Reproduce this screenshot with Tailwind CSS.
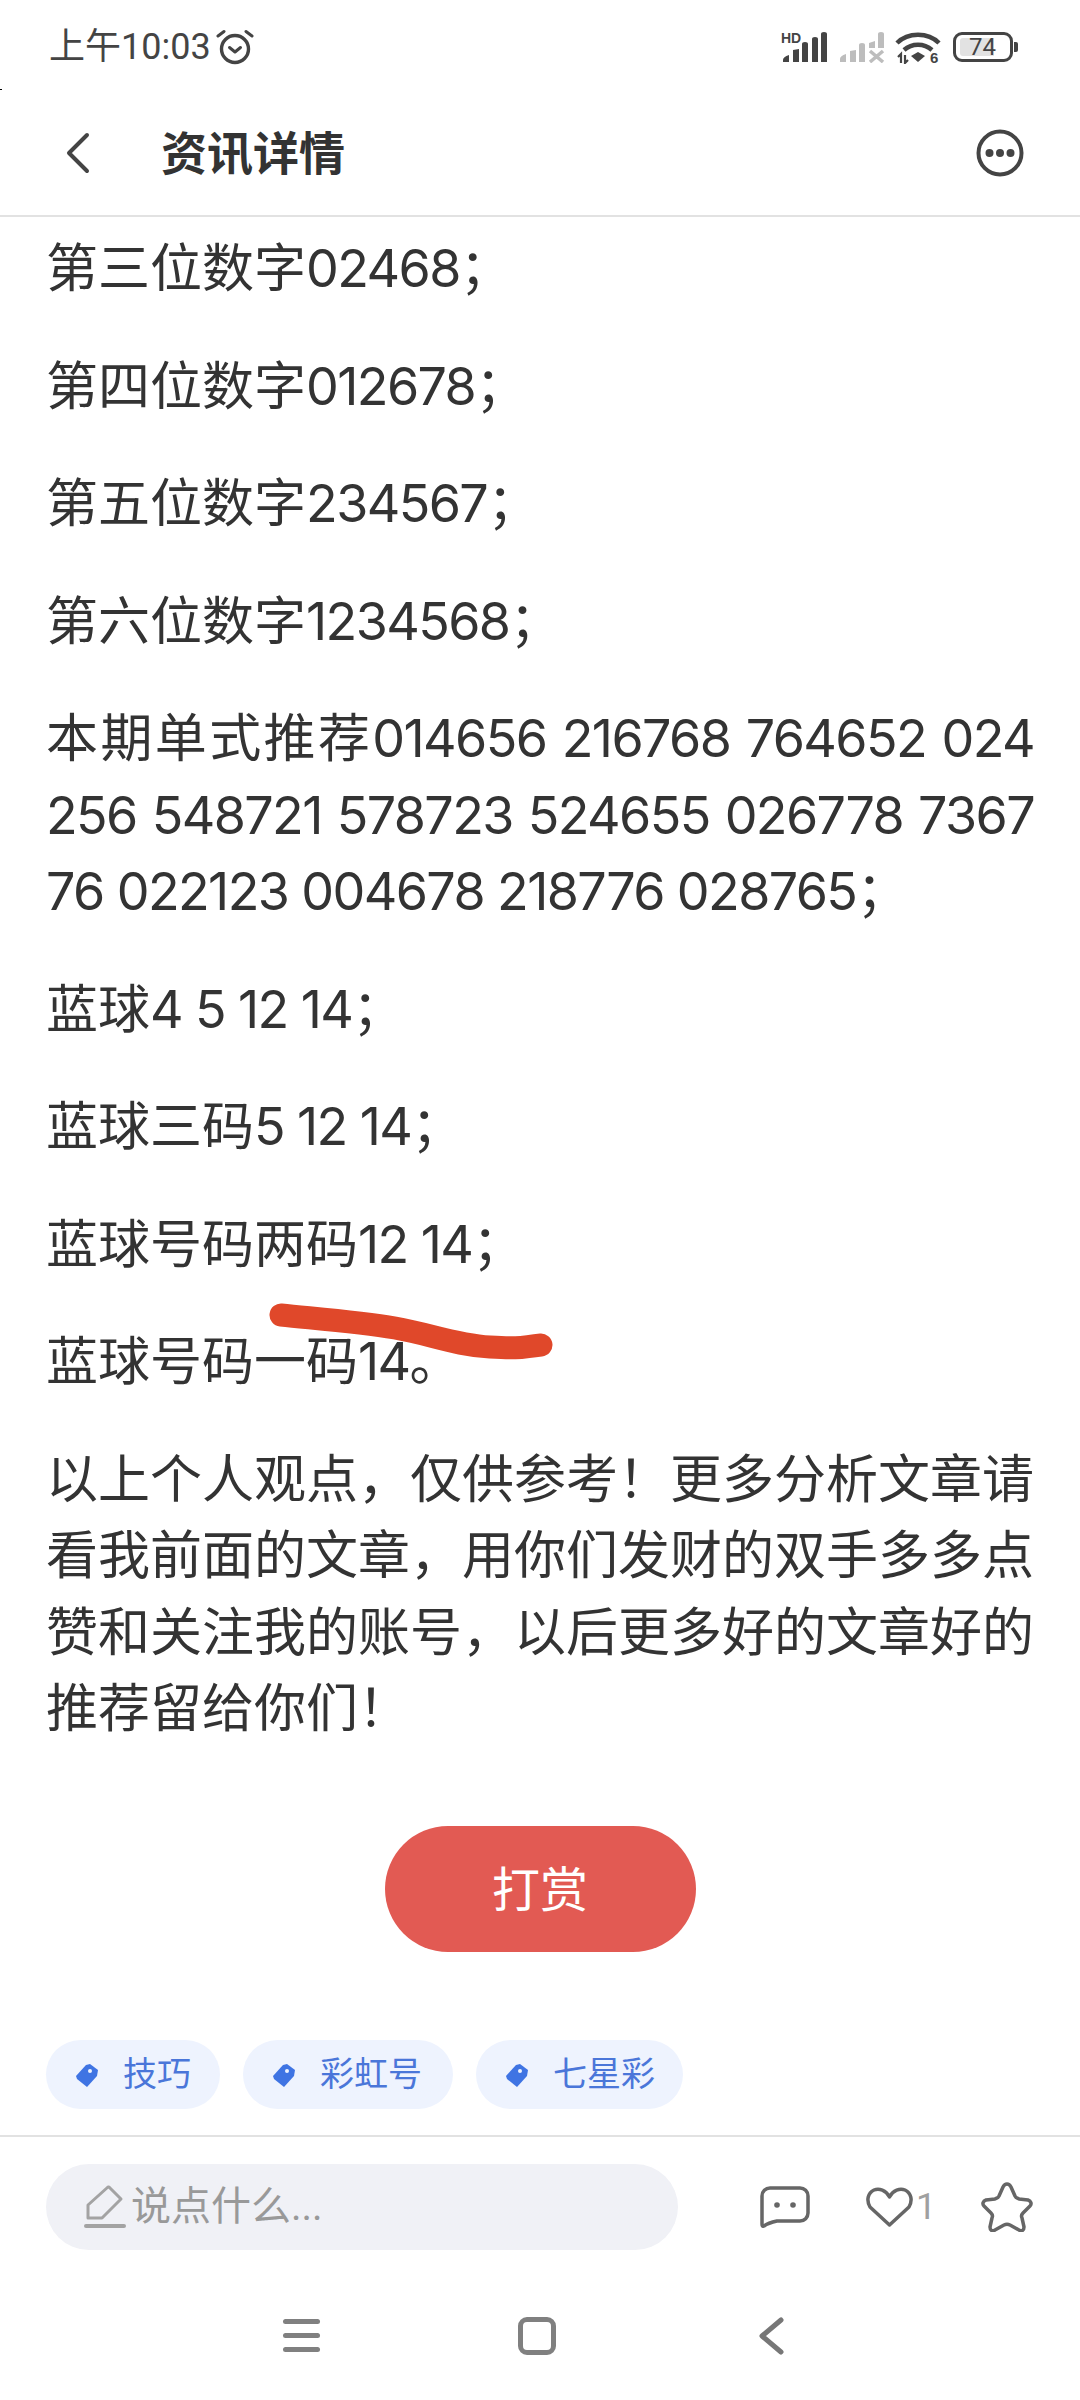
<!DOCTYPE html>
<html lang="zh">
<head>
<meta charset="utf-8">
<script src="https://cdn.jsdelivr.net/npm/@tailwindcss/browser@4"></script>
</head>
<body class="m-0 bg-white">
<div class="relative w-[1080px] h-[2400px] overflow-hidden bg-white flex flex-col text-[#333] font-['Roboto','Noto_Sans_CJK_SC',sans-serif]">
  <div class="absolute left-0 top-[89px] w-[2px] h-[1px] bg-black"></div>
  <!-- status bar -->
  <div class="h-[92px] shrink-0 flex items-center justify-between pl-[49px] pr-[62px] pt-[2px]">
    <div class="flex items-center text-[#444]">
      <span class="text-[36px] leading-[46px]">上午10:03</span>
      <svg class="ml-[5px]" width="38" height="36" viewBox="0 0 38 36" fill="none" stroke="#444"><circle cx="19" cy="20" r="13.5" stroke-width="3.4"/><path d="M13.5 18.5l5.5 4.5 5.5-4.5" stroke-width="3" stroke-linecap="round" stroke-linejoin="round"/><path d="M2 7l6-4.500M36 7l-6-4.500" stroke-width="3" stroke-linecap="round"/></svg>
    </div>
    <div class="flex items-center">
      <svg width="48" height="32" viewBox="0 0 48 32" fill="#444"><text x="0" y="12" font-family="Liberation Sans" font-weight="700" font-size="14" fill="#444">HD</text><path d="M2 31v-2q0-3 6-5v7zM12 31V19l6-1v13zM21 31V13q0-2 3-2t3 2v18zM31 31V8q0-2 3-2t3 2v23zM40 31V3q0-2 3-2t3 2v28z"/></svg>
      <svg class="ml-[10px]" width="46" height="32" viewBox="0 0 46 32" fill="#bdbdbd"><path d="M1 31v-3q0-3 6-5v8zM11 31V20l6-1v12zM20 31V14q0-2 3-2t3 2v17zM30 17v-5l6-2v7zM39 17V3q0-2 3-2t3 2v14z"/><path d="M31 20l13 11M44 20L31 31" stroke="#bdbdbd" stroke-width="3.500" fill="none"/></svg>
      <svg class="ml-[10px]" width="46" height="34" viewBox="0 0 46 34" fill="none" stroke="#444"><path d="M2 13C13 2 33 2 44 13" stroke-width="4.500"/><path d="M9 20c8-7 20-7 28 0" stroke-width="4.500"/><path d="M16 26l7-4 7 4-7 6z" fill="#444" stroke="none"/><path d="M3 27l3-3 0 9M10 25l0 8 3-3" stroke-width="2.200"/><text x="35" y="33" font-family="Liberation Sans" font-weight="700" font-size="15" fill="#444" stroke="none">6</text></svg>
      <div class="ml-[12px] relative w-[60px] h-[30px] border-[3px] border-[#444] rounded-[9px] text-[#444]">
        <div class="absolute left-[4px] top-[3px] bottom-[3px] w-[34px] bg-[#e2e2e2] rounded-l-[3px]"></div>
        <div class="absolute inset-0 flex items-center justify-center text-[24px] leading-[24px] pr-[1px]">74</div>
      </div>
      <div class="ml-[1px] w-[4px] h-[10px] bg-[#444] rounded-r-[2px]"></div>
    </div>
  </div>
  <!-- header -->
  <header class="h-[125px] shrink-0 flex items-center justify-between pl-[66px] pr-[56px] border-b-2 border-[#e2e2e2] pb-[2px]">
    <div class="flex items-center">
      <svg width="24" height="42" viewBox="0 0 24 42" fill="none" stroke="#444" stroke-width="4" stroke-linecap="round" stroke-linejoin="round"><path d="M21 3L3 21l18 18"/></svg>
      <h1 class="ml-[71px] mt-[3px] text-[46px] leading-[56px] font-bold text-[#333]">资讯详情</h1>
    </div>
    <svg width="48" height="48" viewBox="0 0 48 48" fill="none"><circle cx="24" cy="24" r="21.500" stroke="#444" stroke-width="4"/><circle cx="13.500" cy="24" r="4" fill="#444"/><circle cx="24" cy="24" r="4" fill="#444"/><circle cx="34.500" cy="24" r="4" fill="#444"/></svg>
  </header>
  <!-- article -->
  <main class="flex-1 min-h-0 px-[46px] pt-[15px] text-[52px] leading-[76.5px] text-[#333] text-justify break-all">
    <p class="mb-[41px]">第三位数字<span class="font-['Inter'] leading-[0] tracking-[-1.6px]">02468</span>；</p>
    <p class="mb-[41px]">第四位数字<span class="font-['Inter'] leading-[0] tracking-[-1.6px]">012678</span>；</p>
    <p class="mb-[41px]">第五位数字<span class="font-['Inter'] leading-[0] tracking-[-1.6px]">234567</span>；</p>
    <p class="mb-[41px]">第六位数字<span class="font-['Inter'] leading-[0] tracking-[-1.6px]">1234568</span>；</p>
    <p class="mb-[41px]">本期单式推荐<span class="font-['Inter'] leading-[0] tracking-[-1.6px]">014656 216768 764652 024256 548721 578723 524655 026778 736776 022123 004678 218776 028765</span>；</p>
    <p class="mb-[41px]">蓝球<span class="font-['Inter'] leading-[0] tracking-[-1.6px]">4 5 12 14</span>；</p>
    <p class="mb-[41px]">蓝球三码<span class="font-['Inter'] leading-[0] tracking-[-1.6px]">5 12 14</span>；</p>
    <p class="mb-[41px]">蓝球号码两码<span class="font-['Inter'] leading-[0] tracking-[-1.6px]">12 14</span>；</p>
    <p class="mb-[41px]">蓝球号码一码<span class="font-['Inter'] leading-[0] tracking-[-1.6px]">14</span>。</p>
    <p>以上个人观点，仅供参考！更多分析文章请看我前面的文章，用你们发财的双手多多点赞和关注我的账号，以后更多好的文章好的推荐留给你们！</p>
    <div class="flex justify-center mt-[77px]">
      <button class="w-[311px] h-[126px] pt-[6px] rounded-full bg-[#e25a53] text-white text-[48px]">打赏</button>
    </div>
  </main>
  <!-- tags -->
  <div class="shrink-0 flex gap-[23px] px-[46px] pb-[26px] text-[#4a76d9] text-[34px] leading-[69px] whitespace-nowrap">
    <div class="h-[69px] w-[174px] rounded-full bg-[#eef3fe] flex items-center pl-[29px]"><svg width="24" height="24" viewBox="0 0 24 24"><path d="M15 1l8 6-1 6-10 11L2 16 1 13 11 2z" fill="#3f74e3"/><circle cx="15" cy="8" r="2" fill="#eef3fe"/></svg><span class="ml-[24px]">技巧</span></div>
    <div class="h-[69px] w-[210px] rounded-full bg-[#eef3fe] flex items-center pl-[29px]"><svg width="24" height="24" viewBox="0 0 24 24"><path d="M15 1l8 6-1 6-10 11L2 16 1 13 11 2z" fill="#3f74e3"/><circle cx="15" cy="8" r="2" fill="#eef3fe"/></svg><span class="ml-[24px]">彩虹号</span></div>
    <div class="h-[69px] w-[207px] rounded-full bg-[#eef3fe] flex items-center pl-[29px]"><svg width="24" height="24" viewBox="0 0 24 24"><path d="M15 1l8 6-1 6-10 11L2 16 1 13 11 2z" fill="#3f74e3"/><circle cx="15" cy="8" r="2" fill="#eef3fe"/></svg><span class="ml-[24px]">七星彩</span></div>
  </div>
  <!-- comment bar -->
  <div class="shrink-0 h-[126px] border-t-2 border-[#e2e2e2] pt-[27px] pl-[46px] flex items-start">
    <div class="w-[632px] h-[86px] rounded-full bg-[#f0f1f6] flex items-center pl-[38px] text-[#999] text-[40px]">
      <svg width="42" height="44" viewBox="0 0 42 44" fill="none" stroke="#a3a3a3"><path d="M4 33V20L24 2l1 0 12 12L18 33z" stroke-width="3" stroke-linejoin="round"/><path d="M2 41h38" stroke-width="4" stroke-linecap="round"/></svg>
      <span class="ml-[5px]">说点什么...</span>
    </div>
    <div class="flex items-center h-[86px] ml-[82px] text-[#a0a0a0]">
      <svg width="50" height="42" viewBox="0 0 50 42" fill="none" stroke="#666" stroke-width="3.500" stroke-linejoin="round"><path d="M10 2h30a8 8 0 0 1 8 8v17a8 8 0 0 1-8 8H17Q8 37 4 40q-2 1-2-2V10a8 8 0 0 1 8-8z"/><circle cx="17" cy="19" r="2.800" fill="#666" stroke="none"/><circle cx="33" cy="19" r="2.800" fill="#666" stroke="none"/></svg>
      <svg class="ml-[56px]" width="47" height="40" viewBox="0 0 47 40" fill="none" stroke="#666" stroke-width="3.500" stroke-linejoin="round"><path d="M23.500 10C20 3 13 1 8 3 2 6 0 13 4 20l19.500 18L43 20c4-7 2-14-4-17-5-2-12 0-15.500 7z"/></svg>
      <span class="ml-[3px] w-[20px] text-[36px] leading-[40px] text-center">1</span>
      <svg class="ml-[45px]" width="52" height="50" viewBox="0 0 52 50" fill="none" stroke="#666" stroke-width="3.500" stroke-linejoin="round"><path d="M26 2c2 0 3 1 4 3l4 9c1 2 2 2 4 3l9 1c3 1 4 4 2 6l-7 7c-1 1-2 3-1 5l2 9c0 3-2 5-5 3l-9-5c-2-1-4-1-6 0l-9 5c-3 2-5 0-5-3l2-9c1-2 0-4-1-5l-7-7c-2-2-1-5 2-6l9-1c2-1 3-1 4-3l4-9c1-2 2-3 4-3z"/></svg>
    </div>
  </div>
  <!-- nav -->
  <div class="shrink-0 h-[139px] pt-[10px] pl-[283px] flex items-center">
    <div class="w-[37px] flex flex-col gap-[9px]">
      <div class="h-[5px] rounded-full bg-[#808080]"></div>
      <div class="h-[5px] rounded-full bg-[#808080]"></div>
      <div class="h-[5px] rounded-full bg-[#808080]"></div>
    </div>
    <div class="ml-[198px] w-[38px] h-[38px] rounded-[9px] border-[5px] border-[#808080]"></div>
    <svg class="ml-[203px]" width="25" height="38" viewBox="0 0 25 38" fill="none" stroke="#777" stroke-width="5" stroke-linecap="round" stroke-linejoin="round"><path d="M22 3L3 19l19 16"/></svg>
  </div>
  <!-- handwritten red mark over the text -->
  <svg class="absolute left-0 top-0 pointer-events-none" width="1080" height="2400" viewBox="0 0 1080 2400" fill="none"><path d="M281 1315C320 1319 360 1322 395 1328S455 1345 490 1347 520 1347 541 1345" stroke="#e0482a" stroke-width="23" stroke-linecap="round" stroke-linejoin="round"/></svg>
</div>
</body>
</html>
